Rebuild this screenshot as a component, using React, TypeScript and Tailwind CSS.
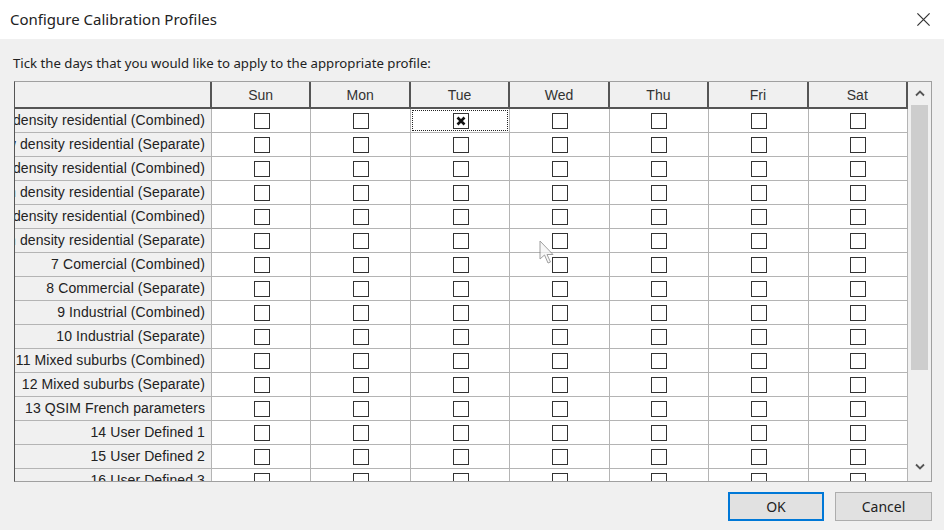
const days = ['Sun', 'Mon', 'Tue', 'Wed', 'Thu', 'Fri', 'Sat'];

const profiles = [
  '1 Low density residential (Combined)',
  '2 Low density residential (Separate)',
  '3 Medium density residential (Combined)',
  '4 Medium density residential (Separate)',
  '5 High density residential (Combined)',
  '6 High density residential (Separate)',
  '7 Comercial (Combined)',
  '8 Commercial (Separate)',
  '9 Industrial (Combined)',
  '10 Industrial (Separate)',
  '11 Mixed suburbs (Combined)',
  '12 Mixed suburbs (Separate)',
  '13 QSIM French parameters',
  '14 User Defined 1',
  '15 User Defined 2',
  '16 User Defined 3',
];

const gridFont = { fontFamily: '"Liberation Sans", Arial, sans-serif' };

type CheckBoxProps = {
  checked?: boolean;
};

function CheckBox({ checked }: CheckBoxProps) {
  return (
    <div className="flex h-[16px] w-[16px] items-center justify-center border-[1.5px] border-[#333] bg-white">
      {checked && (
        <svg width="10" height="10" viewBox="0 0 10 10">
          <path d="M1.5 1.5 L8.5 8.5 M8.5 1.5 L1.5 8.5" stroke="#111" strokeWidth="2.6" />
        </svg>
      )}
    </div>
  );
}

function Cursor() {
  return (
    <svg
      className="pointer-events-none absolute left-[539px] top-[240px] opacity-70"
      width="16"
      height="26"
      viewBox="0 0 16 26"
    >
      <path
        d="M1 1 L1 19 L5.5 15 L9 23 L11.5 22 L8 14.5 L14 14.5 Z"
        fill="#f4f4f4"
        stroke="#777"
        strokeWidth="1"
        strokeLinejoin="round"
      />
    </svg>
  );
}

export default function App() {
  return (
    <div
      className="relative flex h-[530px] w-[944px] flex-col overflow-hidden bg-[#f0f0f0] text-[#1a1a1a]"
      style={{ fontFamily: '"Noto Sans", "Open Sans", sans-serif' }}
    >
      {/* title bar */}
      <div className="flex h-[39px] shrink-0 items-center justify-between bg-white pl-[10px] pr-[13px]">
        <span className="text-[15px] text-[#222]">Configure Calibration Profiles</span>
        <svg width="15" height="15" viewBox="0 0 16 16">
          <path d="M1.5 1.5 L14.5 14.5 M14.5 1.5 L1.5 14.5" stroke="#333" strokeWidth="1.3" />
        </svg>
      </div>

      <div className="flex flex-1 flex-col pl-[13px] pr-[12px]">
        <p className="mt-[14px] mb-[7px] text-[13.2px] leading-[21px] text-[#222]">
          Tick the days that you would like to apply to the appropriate profile:
        </p>

        {/* grid */}
        <div
          className="ml-px flex h-[401px] border border-[#a0a0a0] border-l-[#555] bg-white"
          style={gridFont}
        >
          <div className="flex-1 overflow-hidden">
            <div className="grid h-[27px] grid-cols-[197px_repeat(7,1fr)] border-b-2 border-[#555] bg-[#f0f0f0] text-[14px] text-[#333]">
              <div className="border-r-2 border-[#555]" />
              {days.map((day) => (
                <div
                  key={day}
                  className="flex items-center justify-center border-r-2 border-[#555] pt-px"
                >
                  {day}
                </div>
              ))}
            </div>

            {profiles.map((name, row) => (
              <div
                key={name}
                className="grid h-[24px] grid-cols-[197px_repeat(7,1fr)] border-b border-[#b4b4b4]"
              >
                <div className="flex items-center justify-end overflow-hidden whitespace-nowrap border-r border-[#b4b4b4] bg-[#f0f0f0] pr-[6px] text-[14px] tracking-[0.1px] text-[#222]">
                  {name}
                </div>
                {days.map((day) => {
                  const isFocused = row === 0 && day === 'Tue';
                  return (
                    <div
                      key={day}
                      className="relative flex items-center justify-center border-r border-[#b4b4b4] pl-px"
                    >
                      {isFocused && (
                        <div className="absolute inset-[1px] border border-dotted border-[#222]" />
                      )}
                      <CheckBox checked={isFocused} />
                    </div>
                  );
                })}
              </div>
            ))}
          </div>

          {/* scrollbar */}
          <div className="flex w-[23px] shrink-0 flex-col items-center bg-[#f0f0f0]">
            <div className="flex h-[23px] items-center justify-center">
              <svg width="10" height="7" viewBox="0 0 10 7">
                <path d="M1 5.5 L5 1.5 L9 5.5" fill="none" stroke="#555" strokeWidth="1.8" />
              </svg>
            </div>
            <div className="h-[265px] w-[17px] bg-[#cdcdcd]" />
            <div className="flex-1" />
            <div className="mb-[3px] flex h-[23px] items-center justify-center">
              <svg width="10" height="7" viewBox="0 0 10 7">
                <path d="M1 1.5 L5 5.5 L9 1.5" fill="none" stroke="#555" strokeWidth="1.8" />
              </svg>
            </div>
          </div>
        </div>

        {/* buttons */}
        <div className="mt-[10px] flex justify-end gap-[11px] text-[14px] text-[#222]">
          <button
            type="button"
            className="h-[29px] w-[96px] border-2 border-[#0078d7] bg-[#e1e1e1]"
          >
            OK
          </button>
          <button
            type="button"
            className="h-[29px] w-[97px] border border-[#adadad] bg-[#e1e1e1]"
          >
            Cancel
          </button>
        </div>
      </div>

      <Cursor />
    </div>
  );
}
